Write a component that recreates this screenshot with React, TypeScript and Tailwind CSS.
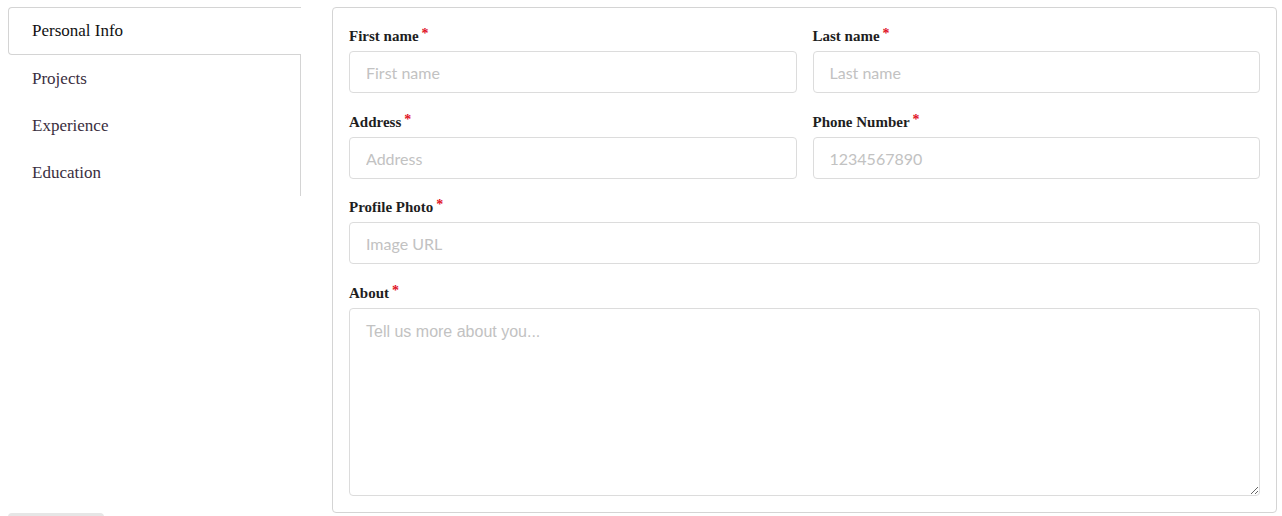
import React from "react";

function Label({ text }: { text: string }) {
  return (
    <div className="h-[24px] mb-[3px] flex items-center text-[15px] font-semibold text-[#1e1e1e] font-['Liberation_Serif',serif]">
      {text}
      <span className="text-[#e0121f] text-[14px] ml-[3px] -mt-[6px]">*</span>
    </div>
  );
}

function Field({ label, placeholder }: { label: string; placeholder: string }) {
  return (
    <div className="flex flex-col flex-1 min-w-0">
      <Label text={label} />
      <input
        placeholder={placeholder}
        className="h-[42px] w-full rounded-[4px] border border-[#dcdcdc] px-4 text-[16px] font-['Lato',sans-serif] placeholder:text-[#c2c2c2] outline-none"
      />
    </div>
  );
}

export default function App() {
  const tabs = ["Projects", "Experience", "Education"];
  return (
    <div className="bg-white min-h-[516px] pt-[7px] pl-2 pr-[5px]">
      <div className="flex items-start">
        <div className="w-[293px] shrink-0 font-['Liberation_Serif',serif] text-[17px]">
          <div className="h-[48px] flex items-center pl-[23px] border-t border-l border-b border-[#d4d4d4] rounded-l-[4px] text-[#111] font-medium">
            Personal Info
          </div>
          <div className="border-r border-[#d4d4d4]">
            {tabs.map((t) => (
              <div key={t} className="h-[47px] flex items-center pl-[24px] text-[#3a2e3e]">
                {t}
              </div>
            ))}
          </div>
        </div>
        <div className="ml-[31px] flex-1 border border-[#d4d4d4] rounded-[4px] p-4 flex flex-col">
          <div className="flex gap-4">
            <Field label="First name" placeholder="First name" />
            <Field label="Last name" placeholder="Last name" />
          </div>
          <div className="flex gap-4 mt-[17px]">
            <Field label="Address" placeholder="Address" />
            <Field label="Phone Number" placeholder="1234567890" />
          </div>
          <div className="flex gap-4 mt-[16px]">
            <Field label="Profile Photo" placeholder="Image URL" />
          </div>
          <div className="flex flex-col mt-[17px]">
            <Label text="About" />
            <textarea
              placeholder="Tell us more about you..."
              className="h-[188px] w-full rounded-[4px] border border-[#dcdcdc] px-4 py-[11px] text-[16px] font-['Liberation_Sans',Arial,sans-serif] placeholder:text-[#c2c2c2] outline-none resize-y"
            />
          </div>
        </div>
      </div>
      <div className="w-[96px] h-[36px] rounded-[4px] bg-[#e6e6e6]" />
    </div>
  );
}
